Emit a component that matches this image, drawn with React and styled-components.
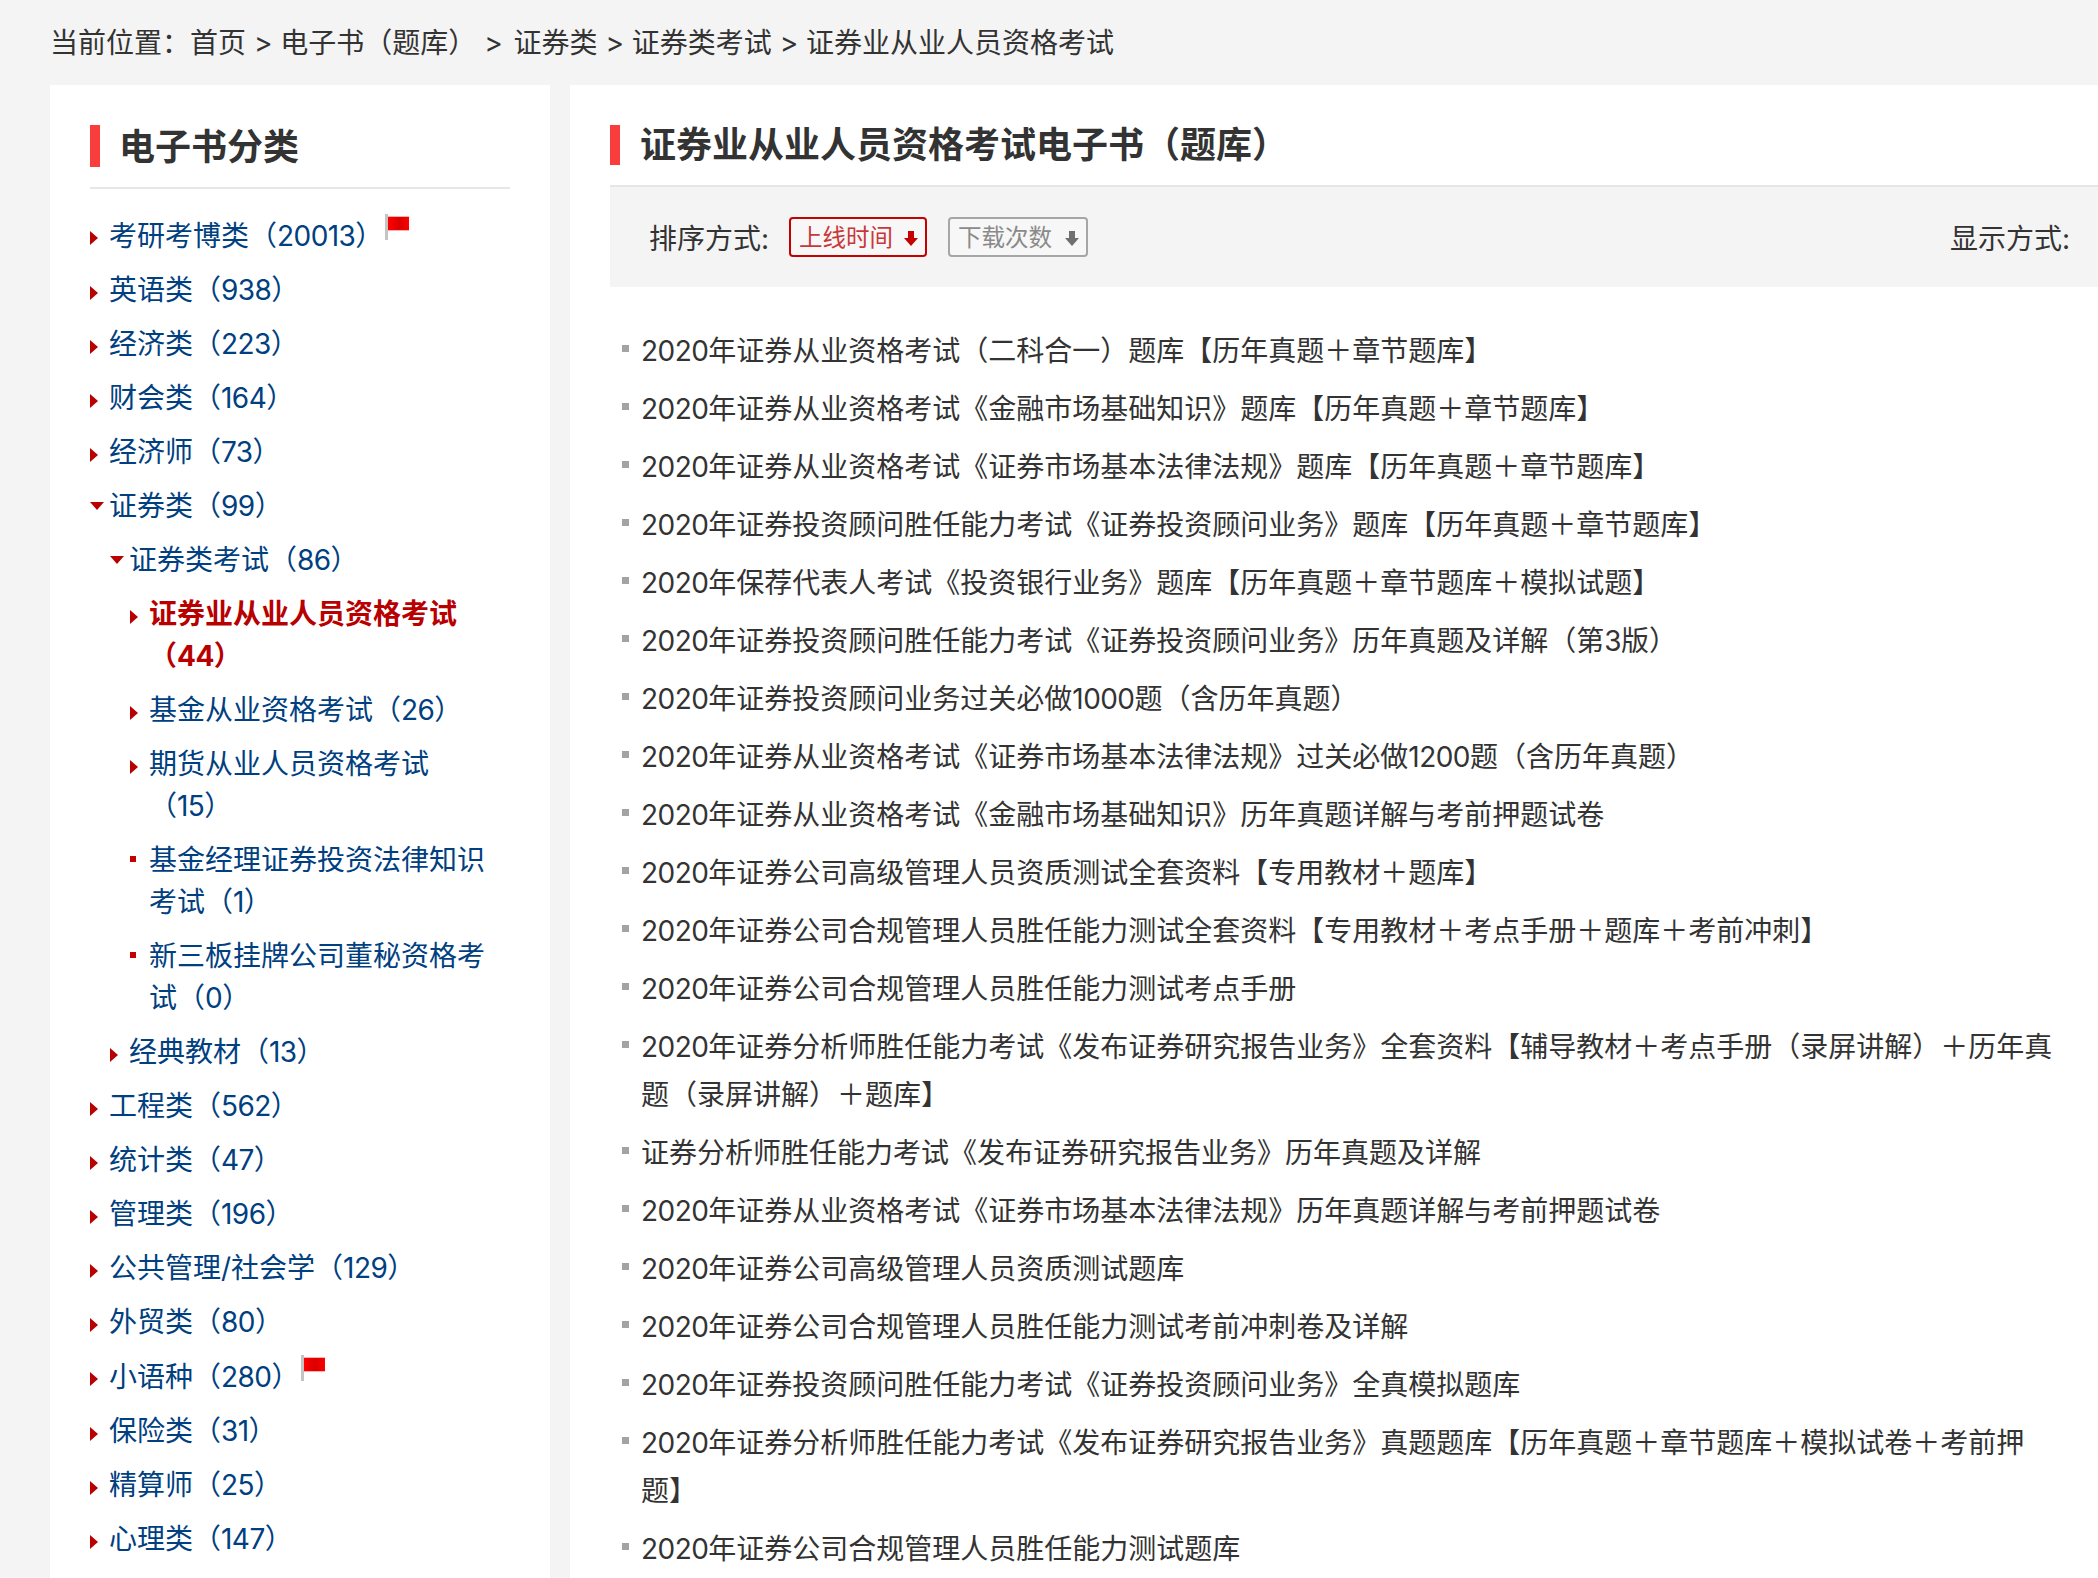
import React from 'react';
import styled, { createGlobalStyle } from 'styled-components';

const GlobalStyle = createGlobalStyle`
  html, body {
    height: 100%;
    margin: 0;
    overflow: hidden;
  }
  body {
    background: #f4f4f4;
    color: #333;
    font-family: Inter, "Noto Sans CJK SC", sans-serif;
    font-size: 28px;
    text-spacing-trim: space-all;
  }
  ul {
    list-style: none;
    margin: 0;
    padding: 0;
  }
`;

const Page = styled.div`
  width: 2098px;
  padding-left: 50px;
  box-sizing: border-box;
`;

const Breadcrumb = styled.div`
  height: 85px;
  line-height: 86px;
  color: #333;
  white-space: pre;
`;

const WideSep = styled.span`
  margin-right: 3px;
`;

const Columns = styled.div`
  display: flex;
  gap: 20px;
`;

const Sidebar = styled.aside`
  flex: 0 0 500px;
  box-sizing: border-box;
  padding: 40px 40px 0;
  background: #fff;
`;

const Main = styled.main`
  flex: 1;
  min-width: 0;
  box-sizing: border-box;
  padding-top: 40px;
  padding-left: 40px;
  background: #fff;
`;

const SideHeading = styled.h2`
  height: 62px;
  margin: 0;
  border-bottom: 2px solid #e6e6e6;
`;

const MainHeading = styled.h1`
  height: 60px;
  margin: 0;
  border-bottom: 2px solid #e6e6e6;
`;

const HeadingText = styled.span`
  display: block;
  border-left: 10px solid #f93c3c;
  padding-left: ${(p) => p.$indent}px;
  height: ${(p) => p.$height}px;
  line-height: ${(p) => p.$lineHeight}px;
  font-size: 36px;
  font-weight: 700;
  color: #333;
`;

const CategoryList = styled.ul`
  padding-top: 25px;
`;

const CategoryRow = styled.li`
  display: flex;
  padding-left: ${(p) => p.$level * 20}px;
  margin-bottom: 12px;
  line-height: 42px;
  color: ${(p) => (p.$active ? '#b80000' : '#004080')};
  font-weight: ${(p) => (p.$active ? 700 : 400)};
`;

const MarkerSlot = styled.span`
  flex: 0 0 19px;
  height: 42px;
  display: flex;
  align-items: center;
`;

const ArrowRight = styled.i`
  width: 0;
  height: 0;
  margin-top: 6px;
  border-left: 8px solid #b80000;
  border-top: 7.5px solid transparent;
  border-bottom: 7.5px solid transparent;
`;

const ArrowDown = styled.i`
  width: 0;
  height: 0;
  margin-top: -1px;
  border-top: 8px solid #b80000;
  border-left: 7px solid transparent;
  border-right: 7px solid transparent;
`;

const LeafDot = styled.i`
  width: 6px;
  height: 6px;
  margin-top: -2px;
  background: #c40000;
`;

const CategoryLabel = styled.span`
  flex: 1;
  min-width: 0;
`;

const FlagIcon = styled.svg`
  width: 24px;
  height: 26px;
  margin-left: 2px;
  vertical-align: 6px;
`;

const Toolbar = styled.div`
  height: 100px;
  display: flex;
  align-items: center;
  justify-content: space-between;
  padding: 0 8px 0 39px;
  background: #f4f4f4;
`;

const SortGroup = styled.div`
  display: flex;
  align-items: center;
`;

const ToolbarLabel = styled.span`
  width: 140px;
  flex: none;
`;

const SortButton = styled.span`
  display: flex;
  align-items: center;
  justify-content: space-between;
  box-sizing: border-box;
  width: ${(p) => (p.$active ? 138 : 140)}px;
  height: 40px;
  margin-right: 21px;
  padding: 2px 6px 0 8px;
  border: 2px solid ${(p) => (p.$active ? '#c40000' : '#a6a6a6')};
  border-radius: 4px;
  background: #f7f7f7;
  font-size: 23.5px;
  line-height: 34px;
  color: ${(p) => (p.$active ? '#c8383a' : '#8a8a8a')};
`;

const BookList = styled.ul`
  padding: 40px 28px 0 0;
`;

const BookRow = styled.li`
  position: relative;
  padding-left: 31px;
  margin-bottom: 10px;
  line-height: 48px;
  color: #333;

  &::before {
    content: '';
    position: absolute;
    left: 12px;
    top: 18px;
    width: 7px;
    height: 7px;
    background: #a3a3a3;
  }
`;

const Digits = styled.span`
  letter-spacing: -0.55px;
`;

const categories = [
  { label: '考研考博类（20013）', level: 0, marker: 'right', flag: true },
  { label: '英语类（938）', level: 0, marker: 'right' },
  { label: '经济类（223）', level: 0, marker: 'right' },
  { label: '财会类（164）', level: 0, marker: 'right' },
  { label: '经济师（73）', level: 0, marker: 'right' },
  { label: '证券类（99）', level: 0, marker: 'down' },
  { label: '证券类考试（86）', level: 1, marker: 'down' },
  { label: '证券业从业人员资格考试（44）', level: 2, marker: 'right', active: true },
  { label: '基金从业资格考试（26）', level: 2, marker: 'right' },
  { label: '期货从业人员资格考试（15）', level: 2, marker: 'right' },
  { label: '基金经理证券投资法律知识考试（1）', level: 2, marker: 'dot' },
  { label: '新三板挂牌公司董秘资格考试（0）', level: 2, marker: 'dot' },
  { label: '经典教材（13）', level: 1, marker: 'right' },
  { label: '工程类（562）', level: 0, marker: 'right' },
  { label: '统计类（47）', level: 0, marker: 'right' },
  { label: '管理类（196）', level: 0, marker: 'right' },
  { label: '公共管理/社会学（129）', level: 0, marker: 'right' },
  { label: '外贸类（80）', level: 0, marker: 'right' },
  { label: '小语种（280）', level: 0, marker: 'right', flag: true },
  { label: '保险类（31）', level: 0, marker: 'right' },
  { label: '精算师（25）', level: 0, marker: 'right' },
  { label: '心理类（147）', level: 0, marker: 'right' },
  { label: '计算机类（216）', level: 0, marker: 'right' },
];

const books = [
  '2020年证券从业资格考试（二科合一）题库【历年真题＋章节题库】',
  '2020年证券从业资格考试《金融市场基础知识》题库【历年真题＋章节题库】',
  '2020年证券从业资格考试《证券市场基本法律法规》题库【历年真题＋章节题库】',
  '2020年证券投资顾问胜任能力考试《证券投资顾问业务》题库【历年真题＋章节题库】',
  '2020年保荐代表人考试《投资银行业务》题库【历年真题＋章节题库＋模拟试题】',
  '2020年证券投资顾问胜任能力考试《证券投资顾问业务》历年真题及详解（第3版）',
  '2020年证券投资顾问业务过关必做1000题（含历年真题）',
  '2020年证券从业资格考试《证券市场基本法律法规》过关必做1200题（含历年真题）',
  '2020年证券从业资格考试《金融市场基础知识》历年真题详解与考前押题试卷',
  '2020年证券公司高级管理人员资质测试全套资料【专用教材＋题库】',
  '2020年证券公司合规管理人员胜任能力测试全套资料【专用教材＋考点手册＋题库＋考前冲刺】',
  '2020年证券公司合规管理人员胜任能力测试考点手册',
  '2020年证券分析师胜任能力考试《发布证券研究报告业务》全套资料【辅导教材＋考点手册（录屏讲解）＋历年真题（录屏讲解）＋题库】',
  '证券分析师胜任能力考试《发布证券研究报告业务》历年真题及详解',
  '2020年证券从业资格考试《证券市场基本法律法规》历年真题详解与考前押题试卷',
  '2020年证券公司高级管理人员资质测试题库',
  '2020年证券公司合规管理人员胜任能力测试考前冲刺卷及详解',
  '2020年证券投资顾问胜任能力考试《证券投资顾问业务》全真模拟题库',
  '2020年证券分析师胜任能力考试《发布证券研究报告业务》真题题库【历年真题＋章节题库＋模拟试卷＋考前押题】',
  '2020年证券公司合规管理人员胜任能力测试题库',
];

const markers = {
  right: <ArrowRight />,
  down: <ArrowDown />,
  dot: <LeafDot />,
};

// Inter's figures run a touch wider than the original font's
const withDigits = (text) =>
  text.split(/(\d+)/).map((part, i) => (i % 2 ? <Digits key={i}>{part}</Digits> : part));

const Flag = () => (
  <FlagIcon viewBox="0 0 24 26">
    <defs>
      <linearGradient id="flagRed" x1="0" x2="1" y1="0" y2="0">
        <stop offset="0" stopColor="#ff0000" />
        <stop offset="0.55" stopColor="#d90000" />
        <stop offset="1" stopColor="#ff0000" />
      </linearGradient>
    </defs>
    <rect x="0" y="0" width="3" height="26" fill="#c4c4c4" />
    <rect x="3" y="2" width="21" height="15" fill="#ffb0b0" />
    <rect x="3" y="3" width="21" height="13" fill="url(#flagRed)" />
  </FlagIcon>
);

const SortArrow = ({ color }) => (
  <svg width="16" height="17" viewBox="0 0 16 17">
    <path d="M5 1h6v7h4l-7 8-7-8h4z" fill={color} />
  </svg>
);

const App = () => (
  <Page>
    <GlobalStyle />
    <Breadcrumb>
      当前位置：首页 &gt; 电子书（题库） <WideSep>&gt;</WideSep> 证券类 &gt; 证券类考试 &gt; 证券业从业人员资格考试
    </Breadcrumb>
    <Columns>
      <Sidebar>
        <SideHeading>
          <HeadingText $indent={19} $height={42} $lineHeight={44}>电子书分类</HeadingText>
        </SideHeading>
        <CategoryList>
          {categories.map((cat) => (
            <CategoryRow key={cat.label} $level={cat.level} $active={cat.active}>
              <MarkerSlot>{markers[cat.marker]}</MarkerSlot>
              <CategoryLabel>
                {withDigits(cat.label)}
                {cat.flag && <Flag />}
              </CategoryLabel>
            </CategoryRow>
          ))}
        </CategoryList>
      </Sidebar>
      <Main>
        <MainHeading>
          <HeadingText $indent={20} $height={40} $lineHeight={40}>证券业从业人员资格考试电子书（题库）</HeadingText>
        </MainHeading>
        <Toolbar>
          <SortGroup>
            <ToolbarLabel>排序方式:</ToolbarLabel>
            <SortButton $active>上线时间<SortArrow color="#c40000" /></SortButton>
            <SortButton>下载次数<SortArrow color="#6f6f6f" /></SortButton>
          </SortGroup>
          <ToolbarLabel>显示方式:</ToolbarLabel>
        </Toolbar>
        <BookList>
          {books.map((title) => (
            <BookRow key={title}>{withDigits(title)}</BookRow>
          ))}
        </BookList>
      </Main>
    </Columns>
  </Page>
);

export default App;
